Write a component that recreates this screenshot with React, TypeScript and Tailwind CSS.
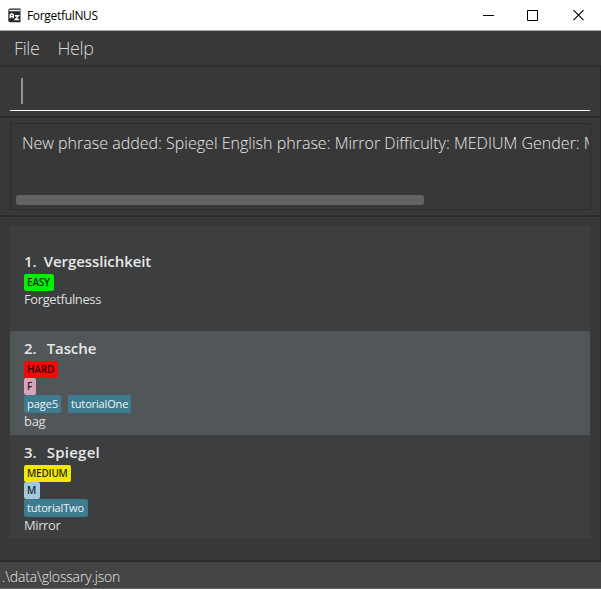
import type { ReactNode } from "react";

function AppIcon() {
  return (
    <svg width="13" height="15" viewBox="0 0 13 15" className="shrink-0">
      <path d="M2 .5h10.500v13.800H2A1.800 1.800 0 0 1 .3 12.500V2.200A1.700 1.700 0 0 1 2 .5Z" fill="#25282b" />
      <path d="M1.800 1.700H12v1.600H1.800a.8.8 0 0 1 0-1.600Z" fill="#ececec" />
      <path d="M2.200 10.200V7l.8-1h1.500l.8 1v3.200M2.300 8.500h3" fill="none" stroke="#fff" strokeWidth="1.300" />
      <path d="M6.800 7.700h3.600L7.300 11.500h3.900" fill="none" stroke="#fff" strokeWidth="1.400" />
    </svg>
  );
}

function TitleBar() {
  return (
    <header className="flex h-[31px] shrink-0 items-center border-b border-[#a6a6a6] bg-white pl-[8px] text-black">
      <AppIcon />
      <span className="ml-[6px] grow pt-px text-[12px] tracking-[-0.32px]">ForgetfulNUS</span>
      <svg width="120" height="30" viewBox="0 0 120 30" fill="none" stroke="#000">
        <path d="M2 15.500h11" />
        <path d="M46.500 10.500h10v10h-10Z" />
        <path d="m92.500 10.200 10 10m0-10-10 10" strokeWidth="1.100" />
      </svg>
    </header>
  );
}

function Tag({ className, children }: { className: string; children: ReactNode }) {
  return (
    <span className={`flex items-center rounded-[2px] pl-[3px] whitespace-nowrap ${className}`}>
      {children}
    </span>
  );
}

const difficulty = "h-[17px] text-[10px] font-semibold text-black/85";
const label = "h-[18px] bg-[#3e7b91] text-[11px] text-[#f4f4f4]";

function Phrase({ index, word, wordClass, meaning, meaningClass, className, children }: {
  index: number;
  word: string;
  wordClass: string;
  meaning: string;
  meaningClass: string;
  className: string;
  children: ReactNode;
}) {
  return (
    <li className={`flex flex-col pl-[14px] ${className}`}>
      <div className="flex h-[24px] text-[15px] leading-[23px] font-semibold text-[#e8e8e8]">
        <span>{index}.</span>
        <span className={wordClass}>{word}</span>
      </div>
      <div className="flex flex-col items-start">{children}</div>
      <div className={`flex h-[17px] items-center text-[13px] text-[#dedede] ${meaningClass}`}>{meaning}</div>
    </li>
  );
}

export default function App() {
  return (
    <div className="flex h-[589px] w-[601px] flex-col overflow-hidden bg-[#383838] font-['Open_Sans','Noto_Sans',sans-serif]">
      <TitleBar />
      <nav className="flex h-[36px] shrink-0 items-center gap-[18px] border-b-2 border-[#2d2d2d] pl-[14px] text-[18px] font-light tracking-[-0.4px] text-[#d8d8d8]">
        <span>File</span>
        <span>Help</span>
      </nav>
      <div className="h-[51px] shrink-0 border-r border-b-2 border-[#2a2a2a] px-[10px] pt-[11px]">
        <div className="flex h-[33px] border-b border-white pl-[11px]">
          <div className="h-[26px] w-[2px] bg-[#929292]" />
        </div>
      </div>
      <section className="h-[99px] shrink-0 border-r border-b-2 border-[#2a2a2a] px-[9px] pt-[5px]">
        <div className="ml-px flex h-[87px] flex-col overflow-hidden border border-[#2c2c2c] pr-px pl-[5px]">
          <p className="mt-[7px] ml-[6px] h-[24px] overflow-hidden text-[16px] leading-[24px] font-light tracking-[0.01px] whitespace-nowrap text-[#e8e8e8]">
            New phrase added: Spiegel English phrase: Mirror Difficulty: MEDIUM Gender: M
          </p>
          <div className="mt-[40px] h-[10px] w-[408px] rounded-[3px] bg-[#646464]" />
        </div>
      </section>
      <main className="grow border-r border-[#2a2a2a] pt-[9px] pr-[10px] pl-[10px]">
        <ul className="bg-[#3c3e3f]">
          <Phrase index={1} word="Vergesslichkeit" wordClass="ml-[7px] tracking-[-0.08px]" meaning="Forgetfulness" meaningClass="tracking-[-0.4px]" className="h-[105px] pt-[24px]">
            <Tag className={`w-[30px] tracking-[-0.2px] bg-[#00f000] ${difficulty}`}>EASY</Tag>
          </Phrase>
          <Phrase index={2} word="Tasche" wordClass="ml-[10px] tracking-[-0.1px]" meaning="bag" meaningClass="tracking-[-0.3px]" className="h-[104px] bg-[#515658] pt-[6px]">
            <Tag className={`w-[34px] tracking-[-0.2px] bg-[#f00a0a] ${difficulty}`}>HARD</Tag>
            <Tag className={`w-[12px] bg-[#d8a3bd] ${difficulty}`}>F</Tag>
            <div className="flex gap-[7px]">
              <Tag className={`w-[37px] ${label}`}>page5</Tag>
              <Tag className={`w-[63px] tracking-[-0.15px] ${label}`}>tutorialOne</Tag>
            </div>
          </Phrase>
          <Phrase index={3} word="Spiegel" wordClass="ml-[10px] tracking-[0.25px]" meaning="Mirror" meaningClass="tracking-[-0.4px]" className="h-[103px] pt-[6px]">
            <Tag className={`w-[47px] tracking-[-0.2px] bg-[#f0e800] ${difficulty}`}>MEDIUM</Tag>
            <Tag className={`w-[16px] bg-[#a2cadb] ${difficulty}`}>M</Tag>
            <Tag className={`w-[64px] tracking-[-0.15px] ${label}`}>tutorialTwo</Tag>
          </Phrase>
        </ul>
      </main>
      <footer className="flex h-[29px] shrink-0 items-center border-t-2 border-b border-t-[#2b2b2b] border-b-[#696567] bg-[#444444] pt-[2px] pl-[2px] text-[14px] font-light tracking-[-0.15px] text-[#e6e6e6]">
        .\data\glossary.json
      </footer>
    </div>
  );
}
